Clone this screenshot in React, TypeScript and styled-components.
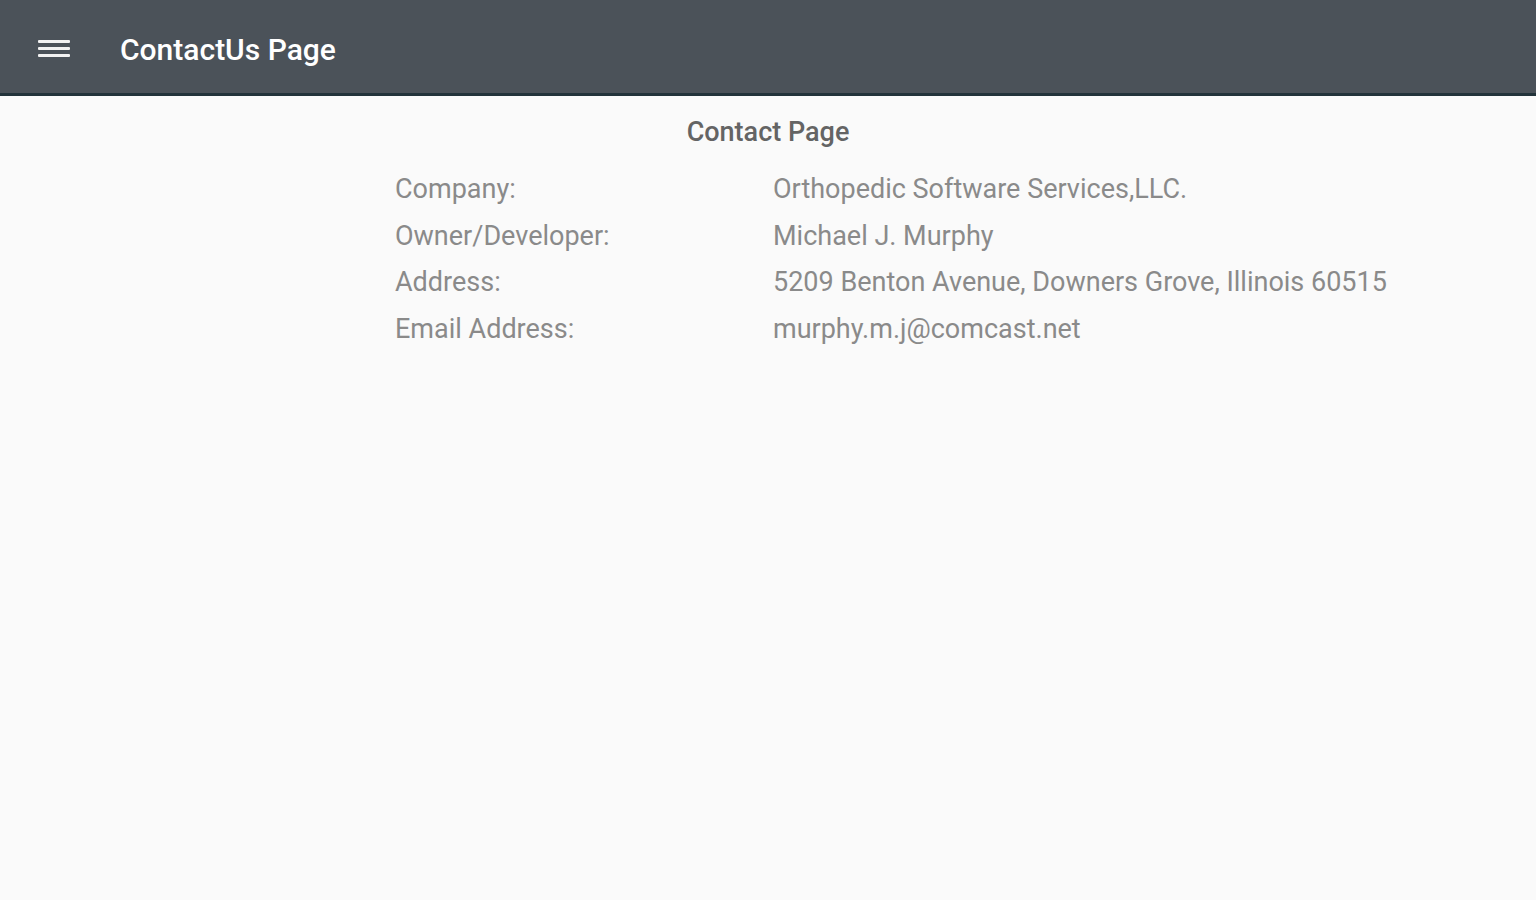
import React from "react";
import styled, { createGlobalStyle } from "styled-components";

const GlobalStyle = createGlobalStyle`
  html, body { margin: 0; padding: 0; background: #fafafa; }
  body { font-family: Roboto, "Noto Sans", Arial, sans-serif; }
`;

const Page = styled.div`
  min-height: 900px;
  background: #fafafa;
`;

const AppBar = styled.header`
  height: 93px;
  background: #4b5259;
  border-bottom: 3px solid #22333a;
  display: flex;
  align-items: center;
  padding-left: 38px;
  gap: 50px;
  box-sizing: content-box;
`;

const MenuButton = styled.button`
  width: 32px;
  height: 17px;
  margin-top: 3px;
  padding: 0;
  border: none;
  background: transparent;
  display: flex;
  flex-direction: column;
  justify-content: space-between;
  cursor: pointer;
`;

const MenuLine = styled.span`
  display: block;
  height: 3px;
  width: 32px;
  background: #f2f2f2;
  border-radius: 1px;
`;

const Title = styled.h1`
  margin: 5px 0 0;
  color: #ffffff;
  font-size: 30px;
  font-weight: 500;
  letter-spacing: 0;
`;

const Content = styled.main`
  display: flex;
  flex-direction: column;
`;

const Heading = styled.h2`
  margin: 20px 0 18px;
  text-align: center;
  font-size: 27px;
  font-weight: 500;
  color: #646464;
`;

const InfoGrid = styled.dl`
  margin: 0;
  padding-left: 395px;
  display: grid;
  grid-template-columns: 378px auto;
`;

const Label = styled.dt`
  margin: 0;
  font-size: 27px;
  line-height: 46.5px;
  color: #8a8a8a;
`;

const Value = styled.dd`
  margin: 0;
  font-size: 27px;
  line-height: 46.5px;
  color: #8a8a8a;
`;

const rows: [string, string][] = [
  ["Company:", "Orthopedic Software Services,LLC."],
  ["Owner/Developer:", "Michael J. Murphy"],
  ["Address:", "5209 Benton Avenue, Downers Grove, Illinois 60515"],
  ["Email Address:", "murphy.m.j@comcast.net"],
];

export default function App() {
  return (
    <Page>
      <GlobalStyle />
      <AppBar>
        <MenuButton aria-label="menu">
          <MenuLine />
          <MenuLine />
          <MenuLine />
        </MenuButton>
        <Title>ContactUs Page</Title>
      </AppBar>
      <Content>
        <Heading>Contact Page</Heading>
        <InfoGrid>
          {rows.map(([k, v]) => (
            <React.Fragment key={k}>
              <Label>{k}</Label>
              <Value>{v}</Value>
            </React.Fragment>
          ))}
        </InfoGrid>
      </Content>
    </Page>
  );
}
